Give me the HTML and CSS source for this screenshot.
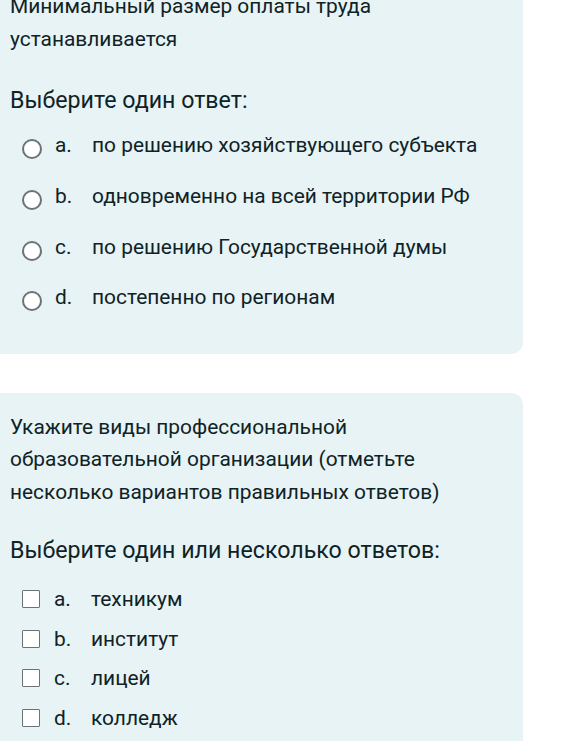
FILE: index.html
```html
<!DOCTYPE html>
<html lang="ru">
<head>
<meta charset="utf-8">
<link rel="stylesheet" href="styles.css">
</head>
<body>
<div class="page">
  <section class="card card-first">
    <div class="qtext">Минимальный размер оплаты труда<br>устанавливается</div>
    <div class="prompt">Выберите один ответ:</div>
    <div class="answers radios">
      <div class="row"><span class="radio"></span><span class="letter">a.</span><span class="txt">по решению хозяйствующего субъекта</span></div>
      <div class="row"><span class="radio"></span><span class="letter">b.</span><span class="txt">одновременно на всей территории РФ</span></div>
      <div class="row"><span class="radio"></span><span class="letter">c.</span><span class="txt">по решению Государственной думы</span></div>
      <div class="row"><span class="radio"></span><span class="letter">d.</span><span class="txt">постепенно по регионам</span></div>
    </div>
  </section>
  <section class="card card-second">
    <div class="qtext">Укажите виды профессиональной<br>образовательной организации (отметьте<br>несколько вариантов правильных ответов)</div>
    <div class="prompt">Выберите один или несколько ответов:</div>
    <div class="answers checks">
      <div class="row"><span class="check"></span><span class="letter">a.</span><span class="txt">техникум</span></div>
      <div class="row"><span class="check"></span><span class="letter">b.</span><span class="txt">институт</span></div>
      <div class="row"><span class="check"></span><span class="letter">c.</span><span class="txt">лицей</span></div>
      <div class="row"><span class="check"></span><span class="letter">d.</span><span class="txt">колледж</span></div>
    </div>
  </section>
</div>
</body>
</html>
```
FILE: styles.css
```css
html, body {
  margin: 0;
  padding: 0;
  background: #ffffff;
}
body {
  font-family: Roboto, "Noto Sans", sans-serif;
  color: #0f2226;
  overflow: hidden;
}
.page {
  margin-top: -28px;
  display: flex;
  flex-direction: column;
  gap: 39px;
}
.card {
  width: 523px;
  box-sizing: border-box;
  background: #e7f3f5;
  border-radius: 0 12px 12px 0;
  padding: 18px 10px 31px 10px;
}
.qtext {
  font-size: 20.9px;
  line-height: 32.5px;
}
.prompt {
  font-size: 23.2px;
  line-height: 28px;
  margin-top: 31px;
}
.card-second .prompt {
  margin-top: 28px;
}
.answers {
  display: flex;
  flex-direction: column;
  margin-left: 12px;
}
.radios {
  margin-top: 6px;
}
.radios .row {
  height: 50.7px;
}
.checks {
  margin-top: 15px;
}
.checks .row {
  height: 39.6px;
}
.row {
  display: flex;
  align-items: center;
  font-size: 20.9px;
}
.radio {
  width: 16px;
  height: 16px;
  border: 2px solid #6b7278;
  border-radius: 50%;
  background: #ffffff;
  margin-top: 8px;
  flex: none;
}
.check {
  width: 16px;
  height: 16px;
  border: 1.5px solid #6b7278;
  border-radius: 1px;
  background: #ffffff;
  flex: none;
}
.letter {
  margin-left: 13px;
  width: 37px;
  flex: none;
}
.checks .letter {
  margin-left: 14px;
}
```
